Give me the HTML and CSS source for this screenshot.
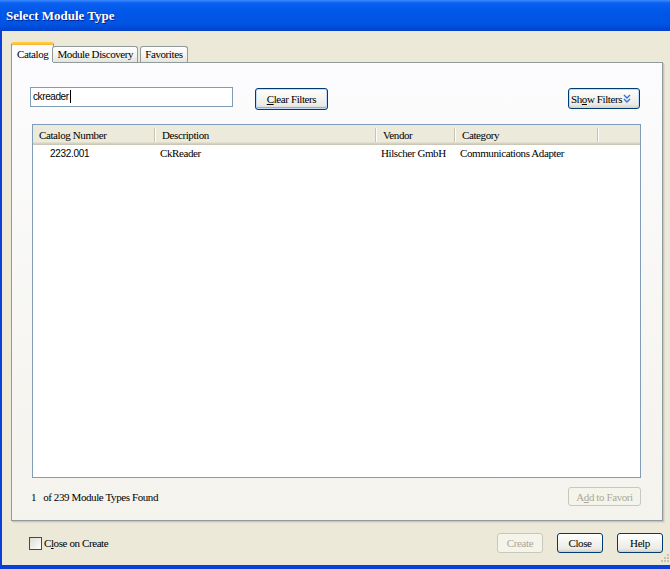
FILE: index.html
```html
<!DOCTYPE html>
<html lang="en">
<head>
  <meta charset="UTF-8">
  <title>Select Module Type</title>
  <link rel="stylesheet" href="styles.css">
</head>
<body>
  <div class="window">
    <div class="titlebar">Select Module Type</div>

    <div class="content">
      <div class="tabs">
        <div class="tab selected">Catalog</div>
        <div class="tab">Module Discovery</div>
        <div class="tab">Favorites</div>
      </div>

      <div class="panel">
        <div class="search-row">
          <div class="search">ckreader<span class="caret"></span></div>
          <button class="btn clear"><u>C</u>lear Filters</button>
          <button class="btn show">Sh<u>o</u>w Filters
            <svg width="8" height="9" viewBox="0 0 8 9">
              <path d="M1 1 L4 4 L7 1 M1 5 L4 8 L7 5" fill="none" stroke="#3c6fd8" stroke-width="1.4"/>
            </svg>
          </button>
        </div>

        <div class="list">
          <div class="list-head">
            <div class="col first">Catalog Number</div>
            <div class="col">Description</div>
            <div class="col">Vendor</div>
            <div class="col">Category</div>
            <div class="col last"></div>
          </div>
          <div class="list-row">
            <div class="cell first num">2232.001</div>
            <div class="cell">CkReader</div>
            <div class="cell">Hilscher GmbH</div>
            <div class="cell">Communications Adapter</div>
            <div class="cell"></div>
          </div>
        </div>

        <div class="status-row">
          <span class="found">1&nbsp;&nbsp; of 239 Module Types Found</span>
          <button class="btn fav" disabled>A<u>d</u>d to Favori</button>
        </div>
      </div>

      <div class="footer">
        <label class="check"><span class="box"></span>C<u>l</u>ose on Create</label>
        <div class="actions">
          <button class="btn small" disabled>Create</button>
          <button class="btn small">Close</button>
          <button class="btn small">Help</button>
        </div>
      </div>
    </div>

    <svg class="grip" width="12" height="12" viewBox="0 0 12 12">
      <g fill="#c4c1b4">
        <rect x="9" y="1" width="2" height="2"/>
        <rect x="6" y="4" width="2" height="2"/>
        <rect x="9" y="4" width="2" height="2"/>
        <rect x="3" y="7" width="2" height="2"/>
        <rect x="6" y="7" width="2" height="2"/>
        <rect x="9" y="7" width="2" height="2"/>
      </g>
    </svg>
  </div>
</body>
</html>
```

FILE: styles.css
```css
html, body {
  margin: 0;
  padding: 0;
  width: 670px;
  height: 569px;
  overflow: hidden;
  background: #ece9d8;
}

.window {
  position: relative;
  display: flex;
  flex-direction: column;
  height: 569px;
  box-sizing: border-box;
  border-left: 2px solid #0a3fd8;
  border-bottom: 4px solid #0a3fd8;
  background: #ece9d8;
  font-family: "Liberation Serif", serif;
  font-size: 11px;
  letter-spacing: -0.4px;
  color: #000;
}

.titlebar {
  height: 31px;
  flex: none;
  margin-left: -2px;
  padding-left: 6px;
  line-height: 32px;
  color: #fff;
  font-size: 13px;
  font-weight: bold;
  letter-spacing: 0;
  text-shadow: 1px 1px 0 #0a1f8f;
  background: linear-gradient(#3b8cff 0, #0a5ff0 3px, #0057e8 12px, #0054e3 24px, #0048d4 29px, #0a3fc8 31px);
}

.content {
  flex: 1;
  display: flex;
  flex-direction: column;
  padding: 11px 7px 0 9px;
}

.tabs {
  display: flex;
  align-items: flex-end;
  height: 20px;
  position: relative;
  z-index: 1;
}

.tab {
  height: 15px;
  line-height: 15px;
  padding: 0 4px;
  border: 1px solid #919b9c;
  border-bottom: none;
  border-radius: 3px 3px 0 0;
  background: linear-gradient(#ffffff, #f3f3ef 60%, #e5e4dc);
  white-space: nowrap;
}

.tab + .tab {
  margin-left: 2px;
}

.tab.selected {
  height: 19px;
  line-height: 20px;
  margin-bottom: -1px;
  margin-right: -2px;
  padding: 0 5px;
  border-top: 2px solid #ffc73c;
  box-shadow: inset 0 1px 0 #f3b53b;
  background: #fcfcfe;
  border-radius: 3px 3px 0 0;
}

.tab.selected + .tab {
  margin-left: 0;
}

.panel {
  height: 459px;
  box-sizing: border-box;
  display: flex;
  flex-direction: column;
  padding: 24px 21px 14px 18px;
  border: 1px solid #919b9c;
  box-shadow: 1px 1px 0 #c8c6bb, 2px 2px 0 #dedcd0;
  background: linear-gradient(#fcfcfe, #f6f5f1 70%, #f4f3ee);
}

.search-row {
  display: flex;
  align-items: flex-start;
  height: 23px;
  flex: none;
}

.search {
  width: 203px;
  height: 20px;
  box-sizing: border-box;
  padding-left: 2px;
  border: 1px solid #7f9db9;
  background: #fff;
  font-family: "Liberation Sans", sans-serif;
  font-size: 10px;
  letter-spacing: -0.4px;
  line-height: 18px;
}

.caret {
  display: inline-block;
  width: 1px;
  height: 13px;
  margin-left: 1px;
  vertical-align: -3px;
  background: #000;
}

.btn {
  box-sizing: border-box;
  padding: 0;
  border: 1px solid #003c74;
  border-radius: 3px;
  background: linear-gradient(#ffffff, #f4f4f0 45%, #ecebe6 80%, #d8d2c6);
  box-shadow: inset 0 -1px 0 #d6d0c5;
  font-family: "Liberation Serif", serif;
  font-size: 11px;
  letter-spacing: -0.4px;
  color: #000;
  white-space: nowrap;
}

.btn:disabled {
  border-color: #c9c7ba;
  background: #f5f4ea;
  box-shadow: none;
  color: #aca899;
}

.clear {
  width: 73px;
  height: 22px;
  margin: 1px 0 0 22px;
  box-shadow: inset 0 0 0 1px #c2d9f7, inset 0 -1px 0 1px #8fb0e6;
}

.show {
  display: flex;
  align-items: center;
  width: 72px;
  height: 21px;
  margin: 1px 1px 0 auto;
  padding: 0 2px;
  box-shadow: inset 0 0 0 1px #c2d9f7;
}

.show svg {
  margin-left: 1px;
}

.list {
  flex: none;
  height: 354px;
  box-sizing: border-box;
  margin: 14px 0 0 2px;
  border: 1px solid #7f9db9;
  background: #fff;
}

.list-head,
.list-row {
  display: grid;
  grid-template-columns: 122px 221px 79px 143px 1fr;
}

.list-head {
  height: 20px;
  background: #ebeadb;
  box-shadow: inset 0 -1px 0 #cbc7b8, inset 0 -2px 0 #d6d2c2, inset 0 -3px 0 #e2decd;
}

.col {
  height: 14px;
  margin: 3px 0;
  padding-left: 7px;
  line-height: 14px;
  border-right: 1px solid #c7c5b2;
  box-shadow: 1px 0 0 #fff;
}

.col.first {
  padding-left: 6px;
}

.col.last {
  border-right: none;
  box-shadow: none;
}

.list-row {
  height: 17px;
  line-height: 17px;
}

.cell {
  padding-left: 5px;
  white-space: nowrap;
}

.cell.first {
  padding-left: 17px;
}

.num {
  font-family: "Liberation Sans", sans-serif;
  font-size: 10px;
  letter-spacing: -0.3px;
}

.status-row {
  display: flex;
  align-items: center;
  height: 19px;
  margin-top: 9px;
  flex: none;
}

.found {
  margin-left: 1px;
}

.fav {
  width: 73px;
  height: 19px;
  margin-left: auto;
}

.footer {
  display: flex;
  align-items: center;
  height: 20px;
  margin-top: 12px;
}

.check {
  display: flex;
  align-items: center;
  margin-left: 18px;
}

.box {
  width: 11px;
  height: 11px;
  margin-right: 2px;
  border: 1px solid #1c5180;
  background: linear-gradient(135deg, #dcdcd7, #fff);
}

.actions {
  display: flex;
  gap: 14px;
  margin-left: auto;
}

.small {
  width: 46px;
  height: 20px;
}

.grip {
  position: absolute;
  right: 0;
  bottom: 0;
}
```
